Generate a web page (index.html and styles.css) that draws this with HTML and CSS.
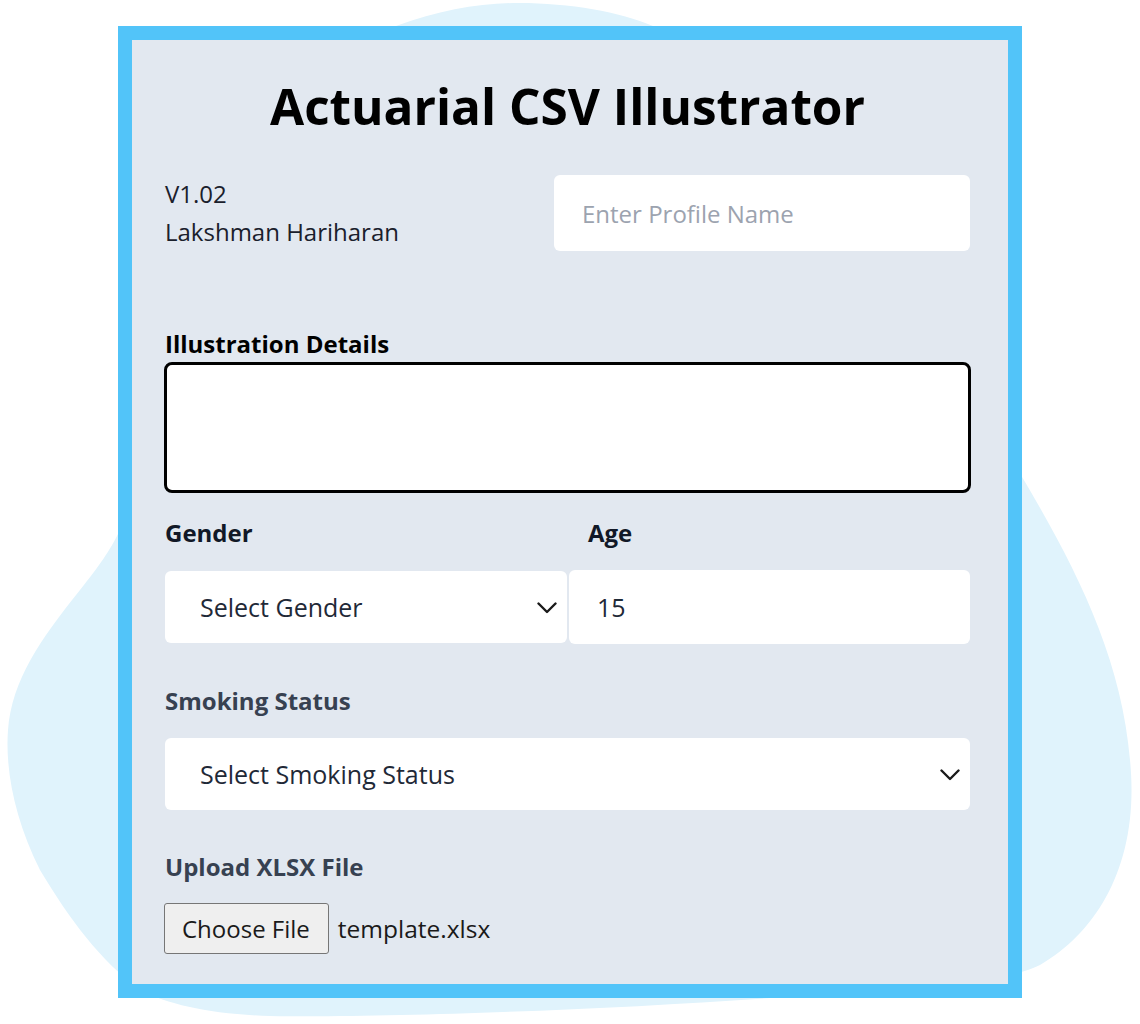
FILE: index.html
```html
<!DOCTYPE html>
<html lang="en">
<head>
<meta charset="utf-8">
<title>Actuarial CSV Illustrator</title>
<link rel="stylesheet" href="styles.css">
</head>
<body>
<svg class="blob" width="1140" height="1024" viewBox="0 0 1140 1024" aria-hidden="true">
  <path d="M396,26 C440,10 480,3 519,3 C570,3 620,12 653,26 L1000,440 C1060,540 1120,640 1130,760 C1140,860 1100,930 1040,965 C1000,985 880,995 770,998 C600,1010 380,1018 270,1016 C210,1014 170,1005 140,990 C100,960 70,920 40,870 C15,820 5,770 8,730 C12,680 40,640 80,590 C100,565 110,550 118,534 Z"/>
</svg>
<main class="card">
  <h1 class="title">Actuarial CSV Illustrator</h1>

  <div class="meta-row">
    <div class="meta">
      <div>V1.02</div>
      <div>Lakshman Hariharan</div>
    </div>
    <input class="text-input profile" type="text" placeholder="Enter Profile Name">
  </div>

  <label class="label label-black details-label" for="details">Illustration Details</label>
  <textarea id="details" class="details"></textarea>

  <div class="pair">
    <div class="field">
      <label class="label label-dark" for="gender">Gender</label>
      <div class="select-wrap">
        <select id="gender" class="select">
          <option>Select Gender</option>
          <option>Male</option>
          <option>Female</option>
        </select>
        <svg class="chevron" width="20" height="12" viewBox="0 0 20 12" aria-hidden="true"><path d="M1.5 1.5 L10 10 L18.5 1.5"/></svg>
      </div>
    </div>
    <div class="field">
      <label class="label label-dark age-label" for="age">Age</label>
      <input id="age" class="text-input age" type="text" value="15">
    </div>
  </div>

  <label class="label label-gray section-label" for="smoking">Smoking Status</label>
  <div class="select-wrap">
    <select id="smoking" class="select">
      <option>Select Smoking Status</option>
      <option>Smoker</option>
      <option>Non-Smoker</option>
    </select>
    <svg class="chevron" width="20" height="12" viewBox="0 0 20 12" aria-hidden="true"><path d="M1.5 1.5 L10 10 L18.5 1.5"/></svg>
  </div>

  <label class="label label-gray section-label upload-label">Upload XLSX File</label>
  <div class="file-row">
    <button class="file-btn" type="button">Choose File</button>
    <span class="file-name">template.xlsx</span>
  </div>
</main>
</body>
</html>
```
FILE: styles.css
```css
html, body {
  margin: 0;
  padding: 0;
  overflow: hidden;
}

body {
  position: relative;
  height: 1024px;
  background: #ffffff;
  font-family: "Open Sans", "Noto Sans", sans-serif;
  font-size: 24px;
  color: #1f2937;
  padding-top: 26px;
  box-sizing: border-box;
}

.blob {
  position: absolute;
  top: 0;
  left: 0;
  z-index: 0;
}

.blob path {
  fill: #e0f3fc;
}

.card {
  position: relative;
  z-index: 1;
  width: 904px;
  margin: 0 auto;
  box-sizing: border-box;
  border: 14px solid #52c4f9;
  background: #e2e8f0;
  padding: 42px 38px 30px 33px;
  display: flex;
  flex-direction: column;
}

.title {
  margin: 0 0 45px;
  font-size: 49.5px;
  line-height: 48px;
  font-weight: 700;
  text-align: center;
  color: #000;
}

.meta-row {
  display: grid;
  grid-template-columns: 389px 416px;
  align-items: start;
}

.meta {
  line-height: 38px;
  color: #1a202c;
}

.text-input {
  font: inherit;
  color: #1f2937;
  background: #fff;
  border: none;
  border-radius: 6px;
  padding: 0 0 0 28px;
  box-sizing: border-box;
  outline: none;
}

.text-input::placeholder {
  color: #9ca3af;
}

.profile {
  height: 76px;
  width: 100%;
}

.label {
  display: block;
  font-weight: 700;
  font-size: 24px;
  line-height: 34px;
}

.label-black { color: #000; }
.label-dark { color: #111827; }
.label-gray { color: #374151; }

.details-label {
  margin-top: 76px;
  margin-bottom: 1px;
}

.details {
  display: block;
  height: 131px;
  width: 807px;
  margin-left: -1px;
  box-sizing: border-box;
  border: 3px solid #000;
  border-radius: 8px;
  background: #fff;
  resize: none;
  font: inherit;
  outline: none;
}

.pair {
  margin-top: 23px;
  display: grid;
  grid-template-columns: 402px 401px;
  column-gap: 2px;
  align-items: start;
}

.field {
  display: flex;
  flex-direction: column;
}

.field .label {
  margin-bottom: 21px;
}

.age-label {
  padding-left: 19px;
}

.age {
  height: 74px;
  margin-top: -1px;
  width: 100%;
  font-size: 25px;
}

.select-wrap {
  position: relative;
}

.select {
  appearance: none;
  -webkit-appearance: none;
  display: block;
  width: 100%;
  height: 72px;
  border: none;
  border-radius: 6px;
  background: #fff;
  font: inherit;
  font-size: 25px;
  color: #1f2937;
  padding: 0 0 0 35px;
  outline: none;
}

.chevron {
  position: absolute;
  right: 10px;
  top: 50%;
  margin-top: -5px;
  pointer-events: none;
}

.chevron path {
  fill: none;
  stroke: #1a1a1a;
  stroke-width: 2.4;
  stroke-linecap: round;
  stroke-linejoin: round;
}

.section-label {
  margin-top: 40px;
  margin-bottom: 20px;
}

.upload-label {
  margin-bottom: 19px;
}

.file-row {
  display: flex;
  align-items: center;
  gap: 9px;
}

.file-btn {
  height: 51px;
  margin-left: -1px;
  padding: 0 18px 0 17px;
  border: 1px solid #767676;
  border-radius: 3px;
  background: #efefef;
  font: inherit;
  color: #1a1a1a;
}

.file-name {
  color: #1a1a1a;
  font-size: 24.5px;
}
```
